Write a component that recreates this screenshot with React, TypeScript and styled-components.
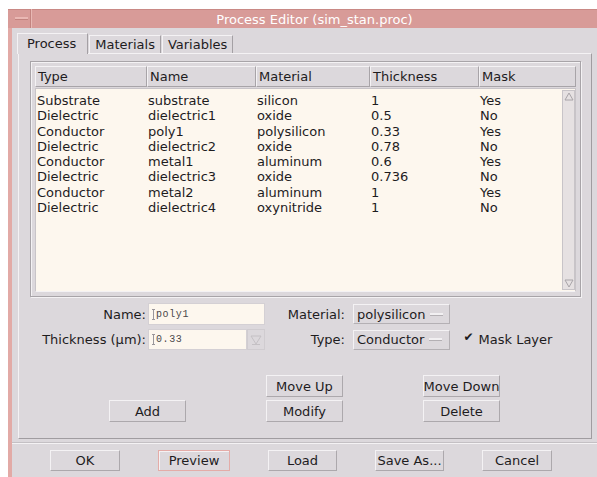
import styled, { createGlobalStyle } from "styled-components";

const GlobalStyle = createGlobalStyle`
  html, body {
    margin: 0;
    padding: 0;
    background: #ffffff;
  }
  body {
    font-family: "DejaVu Sans", "Liberation Sans", sans-serif;
    font-size: 13px;
    color: #1e1c1e;
  }
  * {
    box-sizing: border-box;
  }
`;

const layers = [
  { type: "Substrate", name: "substrate", material: "silicon", thickness: "1", mask: "Yes" },
  { type: "Dielectric", name: "dielectric1", material: "oxide", thickness: "0.5", mask: "No" },
  { type: "Conductor", name: "poly1", material: "polysilicon", thickness: "0.33", mask: "Yes" },
  { type: "Dielectric", name: "dielectric2", material: "oxide", thickness: "0.78", mask: "No" },
  { type: "Conductor", name: "metal1", material: "aluminum", thickness: "0.6", mask: "Yes" },
  { type: "Dielectric", name: "dielectric3", material: "oxide", thickness: "0.736", mask: "No" },
  { type: "Conductor", name: "metal2", material: "aluminum", thickness: "1", mask: "Yes" },
  { type: "Dielectric", name: "dielectric4", material: "oxynitride", thickness: "1", mask: "No" },
];

const columns = ["Type", "Name", "Material", "Thickness", "Mask"];

export default function App() {
  return (
    <>
      <GlobalStyle />
      <Page>
        <Window>
          <TitleBar>
            <MenuBox>
              <MenuDash />
            </MenuBox>
            <Title>Process Editor (sim_stan.proc)</Title>
          </TitleBar>

          <Body>
            <TabRow>
              <Tab $active>Process</Tab>
              <Tab>Materials</Tab>
              <Tab>Variables</Tab>
            </TabRow>

            <Panel>
              <TableFrame>
                <HeaderRow>
                  {columns.map((c) => (
                    <HeaderCell key={c}>{c}</HeaderCell>
                  ))}
                </HeaderRow>
                <ListBody>
                  <Rows>
                    {layers.map((l) => (
                      <Row key={l.name}>
                        <Cell>{l.type}</Cell>
                        <Cell>{l.name}</Cell>
                        <Cell>{l.material}</Cell>
                        <Cell>{l.thickness}</Cell>
                        <Cell>{l.mask}</Cell>
                      </Row>
                    ))}
                  </Rows>
                  <ScrollBar>
                    <ScrollArrow>
                      <svg width="10" height="9" viewBox="0 0 10 9">
                        <path d="M1 8 L5 1 L9 8 Z" fill="none" stroke="#a8a4a8" />
                      </svg>
                    </ScrollArrow>
                    <ScrollArrow>
                      <svg width="10" height="9" viewBox="0 0 10 9">
                        <path d="M1 1 L5 8 L9 1 Z" fill="none" stroke="#a8a4a8" />
                      </svg>
                    </ScrollArrow>
                  </ScrollBar>
                </ListBody>
              </TableFrame>

              <Form>
                <Label>Name:</Label>
                <TextField>
                  <Caret />
                  poly1
                </TextField>
                <Label $gap={8}>Material:</Label>
                <OptionMenu>
                  polysilicon
                  <OptionBar />
                </OptionMenu>
                <span />

                <Label>Thickness (µm):</Label>
                <SpinField>
                  <TextField $flat>
                    <Caret />
                    0.33
                  </TextField>
                  <SpinButton>
                    <svg width="12" height="10" viewBox="0 0 12 10">
                      <path d="M1 1 L6 9 L11 1 Z" fill="none" stroke="#c4c0c4" />
                      <path d="M2 9.5 H10" stroke="#c4c0c4" />
                    </svg>
                  </SpinButton>
                </SpinField>
                <Label $gap={8}>Type:</Label>
                <OptionMenu>
                  Conductor
                  <OptionBar />
                </OptionMenu>
                <Toggle>
                  <CheckMark>✔</CheckMark>
                  Mask Layer
                </Toggle>
              </Form>

              <ActionGrid>
                <Button style={{ gridColumn: 2, gridRow: 1 }}>Move Up</Button>
                <Button style={{ gridColumn: 3, gridRow: 1 }}>Move Down</Button>
                <Button style={{ gridColumn: 1, gridRow: 2 }}>Add</Button>
                <Button style={{ gridColumn: 2, gridRow: 2 }}>Modify</Button>
                <Button style={{ gridColumn: 3, gridRow: 2 }}>Delete</Button>
              </ActionGrid>
            </Panel>

            <Separator />

            <Footer>
              <Button $w={70}>OK</Button>
              <Button $w={72} $focus>
                Preview
              </Button>
              <Button $w={69}>Load</Button>
              <Button $w={69}>Save As...</Button>
              <Button $w={70}>Cancel</Button>
            </Footer>
          </Body>
        </Window>
      </Page>
    </>
  );
}

const Page = styled.div`
  width: 597px;
  height: 477px;
  padding: 9px 0 0 8px;
  overflow: hidden;
`;

const Window = styled.div`
  height: 468px;
  display: flex;
  flex-direction: column;
  border-left: 4px solid #e2aaa6;
  box-shadow: inset 1px 0 0 #cf8f8b;
`;

const TitleBar = styled.div`
  height: 19px;
  display: flex;
  align-items: center;
  background: #d89b98;
  border-top: 1px solid #c98985;
  margin-left: -4px;
`;

const MenuBox = styled.div`
  width: 24px;
  height: 19px;
  margin-top: -1px;
  display: flex;
  align-items: center;
  justify-content: center;
  padding-left: 4px;
  border-right: 1px solid #e8b8b4;
  box-shadow: inset -1px 0 0 #c3837f;
`;

const MenuDash = styled.div`
  width: 13px;
  height: 3px;
  background: #eab8b4;
  border-bottom: 1px solid #c3837f;
`;

const Title = styled.div`
  flex: 1;
  text-align: center;
  color: #ffffff;
  font-size: 13px;
  line-height: 19px;
`;

const Body = styled.div`
  flex: 1;
  background: #dcd8dc;
  padding: 5px 5px 0 5px;
  display: flex;
  flex-direction: column;
`;

const TabRow = styled.div`
  display: flex;
  height: 20px;
  align-items: flex-end;
  position: relative;
  z-index: 1;
`;

const Tab = styled.div<{ $active?: boolean }>`
  height: ${(p) => (p.$active ? "21px" : "18px")};
  margin-bottom: ${(p) => (p.$active ? "-1px" : "0")};
  padding: 0 ${(p) => (p.$active ? "11px 0 9px" : "5px 0 5px")};
  display: flex;
  align-items: center;
  background: #dcd8dc;
  border-top: 1px solid #f4f2f4;
  border-left: 1px solid #f4f2f4;
  border-right: 1px solid #a4a0a4;
  margin-right: 1px;
  line-height: 18px;
`;

const Panel = styled.div`
  margin-left: 1px;
  width: 574px;
  height: 386px;
  border: 1px solid;
  border-color: #f4f2f4 #a09ca0 #a09ca0 #f4f2f4;
  padding: 7px 0 0 11px;
  display: flex;
  flex-direction: column;
`;

const TableFrame = styled.div`
  width: 551px;
  height: 236px;
  border: 1px solid #a8a4a8;
  box-shadow: inset 1px 1px 0 #f4f2f4, 1px 1px 0 #f4f2f4;
  padding: 4px;
  display: flex;
  flex-direction: column;
`;

const HeaderRow = styled.div`
  display: grid;
  grid-template-columns: 112px 109px 114px 109px 1fr;
  height: 21px;
`;

const HeaderCell = styled.div`
  border: 1px solid;
  border-color: #f4f2f4 #a8a4a8 #a8a4a8 #f4f2f4;
  padding-left: 2px;
  display: flex;
  align-items: center;
`;

const ListBody = styled.div`
  margin-top: 1px;
  flex: 1;
  display: flex;
  background: #fdf7ee;
  border: 1px solid #c8c4c8;
  border-bottom-color: #f4f2f4;
`;

const Rows = styled.div`
  flex: 1;
  padding-top: 4px;
`;

const Row = styled.div`
  display: grid;
  grid-template-columns: 111px 109px 114px 109px 1fr;
  height: 15.3px;
  line-height: 15.3px;
`;

const Cell = styled.div`
  padding-left: 1px;
  white-space: nowrap;
`;

const ScrollBar = styled.div`
  width: 13px;
  margin: 1px 0;
  background: #e6e1e2;
  border: 1px solid #c8c4c8;
  display: flex;
  flex-direction: column;
  justify-content: space-between;
`;

const ScrollArrow = styled.div`
  height: 11px;
  display: flex;
  align-items: center;
  justify-content: center;
`;

const Form = styled.div`
  margin-top: 6px;
  display: grid;
  grid-template-columns: 118px 117px 88px auto 1fr;
  grid-template-rows: 22px 21px;
  row-gap: 4px;
  align-items: center;
`;

const Label = styled.div<{ $gap?: number }>`
  text-align: right;
  padding-right: ${(p) => p.$gap ?? 2}px;
  white-space: nowrap;
`;

const TextField = styled.div<{ $flat?: boolean }>`
  height: ${(p) => (p.$flat ? "21px" : "22px")};
  width: ${(p) => (p.$flat ? "99px" : "117px")};
  background: #fdf7ee;
  border: 1px solid #d4d0d4;
  display: flex;
  align-items: center;
  padding-left: 3px;
  font-family: "Liberation Mono", "DejaVu Sans Mono", monospace;
  font-size: 10px;
  color: #4a484a;
  letter-spacing: 0.6px;
`;

const Caret = styled.span`
  display: inline-block;
  width: 3px;
  height: 11px;
  margin-right: 1px;
  border-top: 1px solid #9a969a;
  border-bottom: 1px solid #9a969a;
  background: linear-gradient(#9a969a, #9a969a) center / 1px 100% no-repeat;
`;

const SpinField = styled.div`
  display: flex;
  width: 117px;
`;

const SpinButton = styled.div`
  width: 18px;
  height: 21px;
  background: #dcd8dc;
  border: 1px solid #d0ccd0;
  display: flex;
  align-items: center;
  justify-content: center;
`;

const OptionMenu = styled.div`
  height: 20px;
  display: flex;
  align-items: center;
  gap: 5px;
  padding: 0 6px 0 3px;
  border: 1px solid;
  border-color: #f4f2f4 #b4b0b4 #b4b0b4 #f4f2f4;
`;

const OptionBar = styled.span`
  width: 13px;
  height: 3px;
  background: #f2f0f2;
  border-bottom: 1px solid #b4b0b4;
`;

const Toggle = styled.div`
  padding-left: 13px;
  display: flex;
  align-items: center;
  gap: 5px;
  white-space: nowrap;
`;

const CheckMark = styled.span`
  font-size: 12px;
  font-weight: bold;
  color: #1e1c1e;
  margin-top: -5px;
`;

const ActionGrid = styled.div`
  margin: 25px 0 0 79px;
  display: grid;
  grid-template-columns: 77px 77px 77px;
  grid-template-rows: 22px 22px;
  column-gap: 80px;
  row-gap: 3px;
`;

const Button = styled.div<{ $w?: number; $focus?: boolean }>`
  width: ${(p) => (p.$w ? `${p.$w}px` : "auto")};
  height: ${(p) => (p.$w ? "21px" : "22px")};
  display: flex;
  align-items: center;
  justify-content: center;
  background: #dcd8dc;
  border: 1px solid;
  border-color: ${(p) =>
    p.$focus ? "#e4aca8" : "#f4f2f4 #aca8ac #aca8ac #f4f2f4"};
  box-shadow: ${(p) => (p.$focus ? "inset 1px 1px 0 #f4f2f4" : "none")};
  white-space: nowrap;
`;

const Separator = styled.div`
  margin: 3px -5px 0 -5px;
  height: 2px;
  border-top: 1px solid #c4c0c4;
  border-bottom: 1px solid #f4f2f4;
`;

const Footer = styled.div`
  margin-top: 6px;
  padding-left: 33px;
  display: flex;
  gap: 38px;
`;
